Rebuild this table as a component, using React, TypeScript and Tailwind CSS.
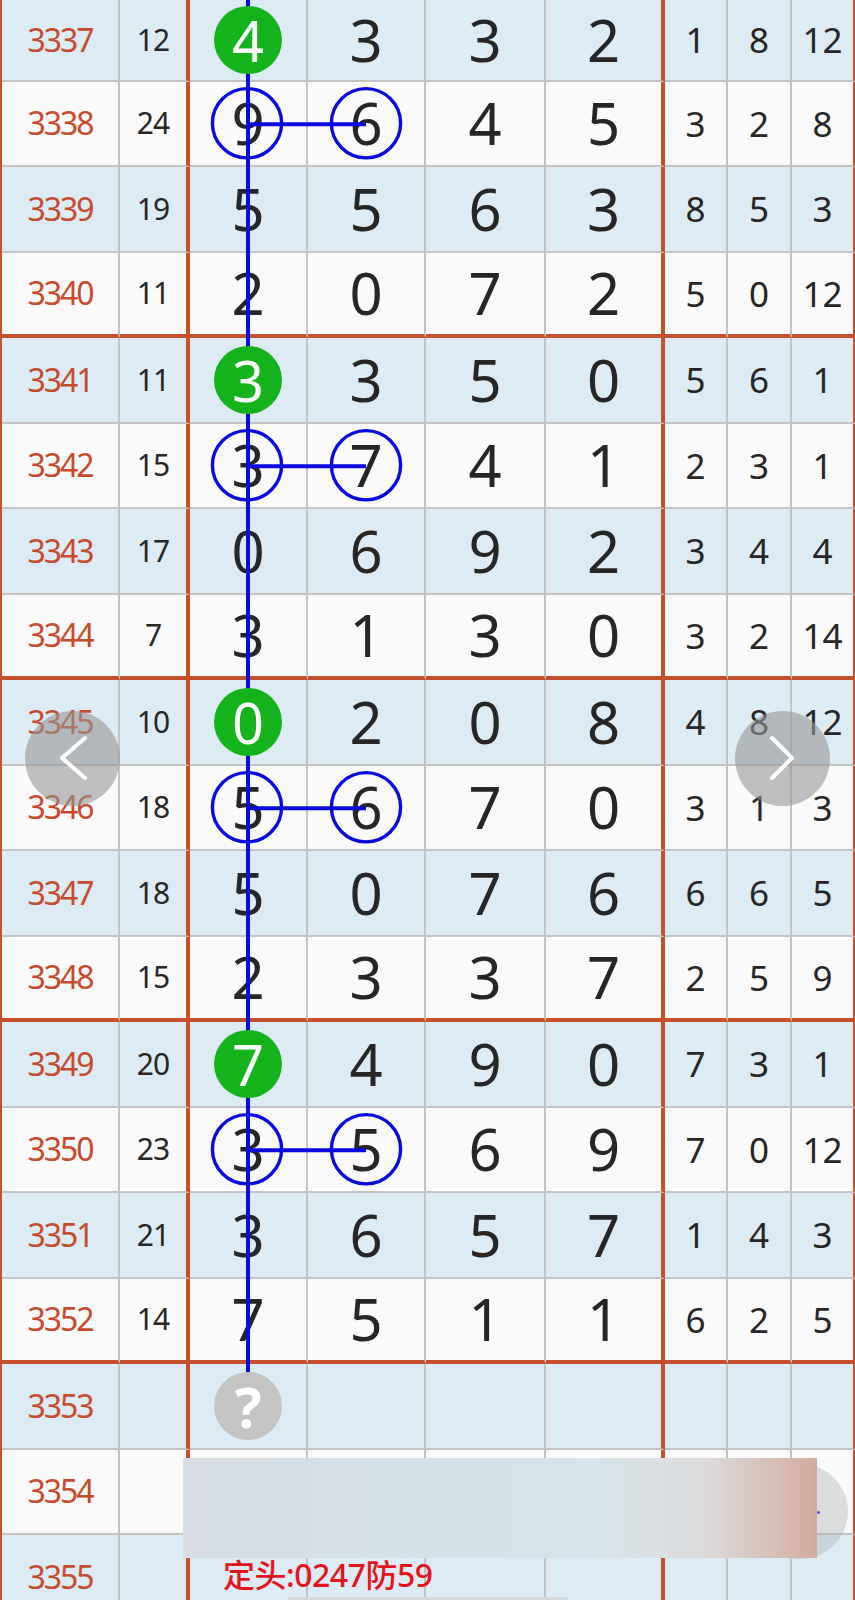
import React from "react";

type Row = { no: string; sum?: string; d?: number[]; r?: number[] };

const rows: Row[] = [
  { no: "3337", sum: "12", d: [4, 3, 3, 2], r: [1, 8, 12] },
  { no: "3338", sum: "24", d: [9, 6, 4, 5], r: [3, 2, 8] },
  { no: "3339", sum: "19", d: [5, 5, 6, 3], r: [8, 5, 3] },
  { no: "3340", sum: "11", d: [2, 0, 7, 2], r: [5, 0, 12] },
  { no: "3341", sum: "11", d: [3, 3, 5, 0], r: [5, 6, 1] },
  { no: "3342", sum: "15", d: [3, 7, 4, 1], r: [2, 3, 1] },
  { no: "3343", sum: "17", d: [0, 6, 9, 2], r: [3, 4, 4] },
  { no: "3344", sum: "7", d: [3, 1, 3, 0], r: [3, 2, 14] },
  { no: "3345", sum: "10", d: [0, 2, 0, 8], r: [4, 8, 12] },
  { no: "3346", sum: "18", d: [5, 6, 7, 0], r: [3, 1, 3] },
  { no: "3347", sum: "18", d: [5, 0, 7, 6], r: [6, 6, 5] },
  { no: "3348", sum: "15", d: [2, 3, 3, 7], r: [2, 5, 9] },
  { no: "3349", sum: "20", d: [7, 4, 9, 0], r: [7, 3, 1] },
  { no: "3350", sum: "23", d: [3, 5, 6, 9], r: [7, 0, 12] },
  { no: "3351", sum: "21", d: [3, 6, 5, 7], r: [1, 4, 3] },
  { no: "3352", sum: "14", d: [7, 5, 1, 1], r: [6, 2, 5] },
  { no: "3353" },
  { no: "3354" },
  { no: "3355" },
];

const ROW_H = 85.5;
const TOP = -4;

// widths include the right border
const cols = [
  "w-[118px] border-r-2 border-r-[#c3c3c3]",
  "w-[70px] border-r-4 border-r-[#c4512b]",
  "w-[118px] border-r-2 border-r-[#c3c3c3]",
  "w-[118px] border-r-2 border-r-[#c3c3c3]",
  "w-[120px] border-r-2 border-r-[#c3c3c3]",
  "w-[119px] border-r-4 border-r-[#c4512b]",
  "w-[63px] border-r-2 border-r-[#c3c3c3]",
  "w-[64px] border-r-2 border-r-[#c3c3c3]",
  "w-[63px] border-r-2 border-r-[#c4512b]",
];

const rowCenter = (i: number) => {
  const b = i % 4 === 3 ? 4 : 2;
  return TOP + ROW_H * i + (ROW_H - b) / 2;
};

const X2 = 248;
const X3 = 366;

function Cell({ c, last, children }: { c: number; last: boolean; children?: React.ReactNode }) {
  return (
    <div
      className={`${cols[c]} h-full shrink-0 flex items-center justify-center ${
        last ? "border-b-4 border-b-[#c4512b]" : "border-b-2 border-b-[#c3c3c3]"
      }`}
    >
      {children}
    </div>
  );
}

export default function App() {
  const ringRows = [1, 5, 9, 13];
  return (
    <div className="relative w-[855px] h-[1600px] overflow-hidden bg-[#fafafa] font-['Noto_Sans','Noto_Sans_CJK_SC',sans-serif]">
      {/* first row is scrolled 4px out of view */}
      <div className="border-l-2 border-l-[#c4512b]">
        {rows.map((row, i) => {
          const last = i % 4 === 3;
          const blue = i % 2 === 0;
          return (
            <div
              key={row.no}
              className={`flex ${i === 0 ? "h-[81.5px]" : "h-[85.5px]"} ${blue ? "bg-[#ddebf4]" : "bg-[#fafafa]"}`}
            >
              <Cell c={0} last={last}>
                <span className="text-[32px] leading-none tracking-[-2px] text-[#c84a2c]">{row.no}</span>
              </Cell>
              <Cell c={1} last={last}>
                <span className="text-[30px] leading-none tracking-[-1px] text-[#262626]">{row.sum}</span>
              </Cell>
              {[0, 1, 2, 3].map((k) => (
                <Cell key={k} c={k + 2} last={last}>
                  {row.d && k === 0 && i % 4 === 0 ? (
                    <div className="relative z-20 w-[68px] h-[68px] rounded-full bg-[#14b31b] flex items-center justify-center text-[56px] leading-none text-white">
                      {row.d[k]}
                    </div>
                  ) : row.d ? (
                    <span className="text-[58px] leading-[58px] text-[#262626]">{row.d[k]}</span>
                  ) : i === 16 && k === 0 ? (
                    <div className="relative z-20 w-[68px] h-[68px] rounded-full bg-[#c4c4c4] flex items-center justify-center text-[56px] font-bold leading-none text-white">
                      ?
                    </div>
                  ) : null}
                </Cell>
              ))}
              {[0, 1, 2].map((k) => (
                <Cell key={k} c={k + 6} last={last}>
                  <span className="text-[35px] leading-none text-[#262626]">{row.r?.[k]}</span>
                </Cell>
              ))}
            </div>
          );
        })}
      </div>

      <svg className="absolute left-0 top-0 z-10 pointer-events-none" width="855" height="1600">
        <line x1={X2} y1={0} x2={X2} y2={1374} stroke="#0a0ade" strokeWidth={4} />
        {ringRows.map((i) => {
          const y = rowCenter(i);
          return (
            <g key={i}>
              <line x1={X2} y1={y + 1} x2={X3} y2={y + 1} stroke="#0a0ade" strokeWidth={4} />
              <circle cx={X2 - 1} cy={y} r={34.6} fill="none" stroke="#0a0ade" strokeWidth={3.4} />
              <circle cx={X3} cy={y} r={34.6} fill="none" stroke="#0a0ade" strokeWidth={3.4} />
            </g>
          );
        })}
      </svg>

      <button className="absolute left-[25px] top-[711px] z-30 w-[95px] h-[95px] rounded-full bg-[rgba(150,150,150,0.6)]">
        <svg width="95" height="95" className="absolute left-0 top-0">
          <polyline points="60,27 37,47 60,67" fill="none" stroke="white" strokeWidth={4} strokeLinecap="round" strokeLinejoin="round" />
        </svg>
      </button>
      <button className="absolute left-[735px] top-[711px] z-30 w-[95px] h-[95px] rounded-full bg-[rgba(150,150,150,0.6)]">
        <svg width="95" height="95" className="absolute left-0 top-0">
          <polyline points="37,27 57,47 37,67" fill="none" stroke="white" strokeWidth={4} strokeLinecap="round" strokeLinejoin="round" />
        </svg>
      </button>

      <div className="absolute left-[753px] top-[1464px] z-30 w-[95px] h-[95px] rounded-full bg-[rgba(170,175,180,0.4)]">
        <div className="absolute left-[64px] top-[47px] w-[3px] h-[3px] rounded-full bg-[#5050d0]" />
      </div>
      <div className="absolute left-[183px] top-[1458px] z-40 w-[634px] h-[100px] bg-[linear-gradient(90deg,#d7dde3_0%,#d5e2ea_40%,#d8e4eb_65%,#dcdcdc_82%,#d3ab9e_100%)]" />

      <div className="absolute left-[223px] top-[1559px] z-40 text-[32px] leading-none font-medium text-[#e5141c] tracking-[-0.5px]">
        定头:0247防59
      </div>
      <div className="absolute left-[287px] top-[1597px] z-40 w-[281px] h-[6px] rounded-full bg-[#d3d8dc]" />
    </div>
  );
}
